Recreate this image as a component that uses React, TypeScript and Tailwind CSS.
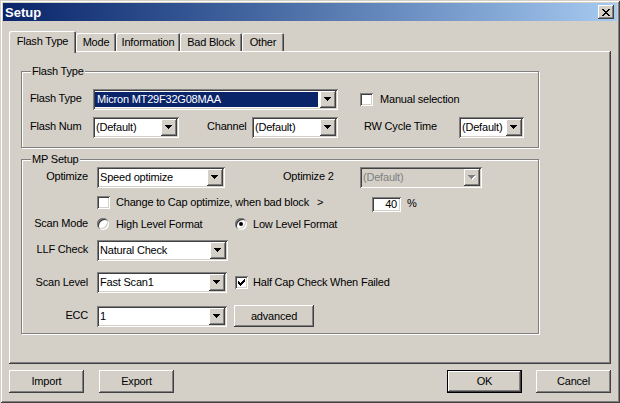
import React from "react";

const RAISED =
  "shadow-[inset_-1px_-1px_0_#404040,inset_1px_1px_0_#ffffff,inset_-2px_-2px_0_#808080,inset_2px_2px_0_#d4d0c8]";
const SUNKEN =
  "shadow-[inset_1px_1px_0_#808080,inset_-1px_-1px_0_#ffffff,inset_2px_2px_0_#404040,inset_-2px_-2px_0_#d4d0c8]";

function Arrow({ disabled }: { disabled?: boolean }) {
  const d = "M0 0h7v1h-1v1h-1v1h-1v1h-1v-1h-1v-1h-1v-1h-1z";
  return (
    <svg width="8" height="5" viewBox="0 0 8 5" shapeRendering="crispEdges">
      {disabled && <path d={d} fill="#ffffff" transform="translate(1 1)" />}
      <path d={d} fill={disabled ? "#808080" : "#000000"} />
    </svg>
  );
}

function Combo({
  cls,
  text,
  selected,
  disabled,
}: {
  cls: string;
  text: string;
  selected?: boolean;
  disabled?: boolean;
}) {
  return (
    <div
      className={`h-[21px] p-[2px] flex shrink-0 ${disabled ? "bg-[#d4d0c8]" : "bg-white"} ${SUNKEN} ${cls}`}
    >
      <div className="flex-1 flex items-center min-w-0 overflow-hidden whitespace-nowrap">
        {selected ? (
          <div className="h-[15px] flex-1 mr-[2px] bg-[#0a246a] text-white flex items-center pl-[2px]">
            {text}
          </div>
        ) : (
          <span className={`pl-[1px] ${disabled ? "text-[#808080]" : ""}`}>{text}</span>
        )}
      </div>
      <div className={`w-[16px] h-[17px] bg-[#d4d0c8] flex items-center justify-center ${RAISED}`}>
        <Arrow disabled={disabled} />
      </div>
    </div>
  );
}

function Check({ checked }: { checked?: boolean }) {
  const px: [number, number][] = [
    [6, 0],
    [5, 1], [6, 1],
    [0, 2], [4, 2], [5, 2], [6, 2],
    [0, 3], [1, 3], [3, 3], [4, 3], [5, 3],
    [0, 4], [1, 4], [2, 4], [3, 4], [4, 4],
    [1, 5], [2, 5], [3, 5],
    [2, 6],
  ];
  return (
    <div className={`w-[13px] h-[13px] bg-white shrink-0 flex items-center justify-center ${SUNKEN}`}>
      {checked && (
        <svg width="7" height="7" viewBox="0 0 7 7" shapeRendering="crispEdges">
          {px.map(([x, y], i) => (
            <rect key={i} x={x} y={y} width="1" height="1" fill="#000" />
          ))}
        </svg>
      )}
    </div>
  );
}

function Radio({ on }: { on?: boolean }) {
  return (
    <div
      className={`w-[12px] h-[12px] rounded-full bg-white shrink-0 flex items-center justify-center ${SUNKEN}`}
    >
      {on && <div className="w-[4px] h-[4px] rounded-full bg-black" />}
    </div>
  );
}

function Btn({ cls, children, def }: { cls: string; children: React.ReactNode; def?: boolean }) {
  if (def) {
    return (
      <div className={`h-[23px] border border-black ${cls}`}>
        <div className={`w-full h-full flex items-center justify-center ${RAISED}`}>{children}</div>
      </div>
    );
  }
  return (
    <div className={`h-[23px] flex items-center justify-center ${RAISED} ${cls}`}>{children}</div>
  );
}

function Group({
  label,
  cls,
  children,
}: {
  label: string;
  cls: string;
  children: React.ReactNode;
}) {
  return (
    <div
      className={`relative border border-[#808080] shadow-[inset_1px_1px_0_#ffffff,1px_1px_0_#ffffff] flex flex-col ${cls}`}
    >
      <span className="absolute left-[9px] -top-[7px] bg-[#d4d0c8] px-[1px] leading-[13px]">
        {label}
      </span>
      {children}
    </div>
  );
}

function Tab({ cls, children }: { cls: string; children: React.ReactNode }) {
  return (
    <div
      className={`h-[18px] flex items-center justify-center rounded-t-[2px] shadow-[inset_1px_1px_0_#ffffff,inset_-1px_0_0_#404040,inset_-2px_0_0_#808080] ${cls}`}
    >
      {children}
    </div>
  );
}

export default function App() {
  return (
    <div className="w-[620px] h-[403px] bg-[#d4d0c8] p-[3px] flex flex-col font-['Liberation_Sans',Arial,sans-serif] text-[11px] tracking-[-0.2px] text-black leading-none overflow-hidden select-none shadow-[inset_1px_1px_0_#d4d0c8,inset_-1px_-1px_0_#404040,inset_2px_2px_0_#ffffff,inset_-2px_-2px_0_#808080]">
      {/* Title bar */}
      <div className="h-[18px] flex items-center justify-between bg-linear-to-r from-[#0a246a] to-[#a6caf0] pl-[2px] pr-[3px]">
        <span className="text-white font-bold text-[13px] tracking-normal">Setup</span>
        <div className={`w-[16px] h-[14px] bg-[#d4d0c8] flex items-center justify-center ${RAISED}`}>
          <svg width="8" height="7" viewBox="0 0 8 7" shapeRendering="crispEdges">
            <path
              d="M0 0h2v1h1v1h2v-1h1v-1h2v1h-1v1h-1v1h-1v1h1v1h1v1h1v1h-2v-1h-1v-1h-2v1h-1v1h-2v-1h1v-1h1v-1h1v-1h-1v-1h-1v-1h-1z"
              fill="#000"
            />
          </svg>
        </div>
      </div>

      {/* Tabs */}
      <div className="mt-[10px] ml-[6px] h-[20px] flex items-end">
        <div className="relative z-10 -mb-[2px] h-[22px] w-[67px] bg-[#d4d0c8] rounded-t-[2px] flex items-center justify-center pb-[2px] shadow-[inset_1px_1px_0_#ffffff,inset_-1px_0_0_#404040,inset_-2px_0_0_#808080]">
          Flash Type
        </div>
        <Tab cls="w-[40px]">Mode</Tab>
        <Tab cls="w-[64px]">Information</Tab>
        <Tab cls="w-[62px]">Bad Block</Tab>
        <Tab cls="w-[42px]">Other</Tab>
      </div>

      {/* Panel */}
      <div className="ml-[6px] w-[602px] h-[313px] pl-[12px] flex flex-col shadow-[inset_-1px_-1px_0_#404040,inset_1px_1px_0_#ffffff,inset_-2px_-2px_0_#808080]">
        <Group label="Flash Type" cls="mt-[20px] w-[518px] h-[77px] pl-[8px]">
          <div className="mt-[17px] h-[21px] flex items-center">
            <span className="w-[63px] pb-[2px]">Flash Type</span>
            <Combo cls="w-[245px]" text="Micron MT29F32G08MAA" selected />
            <div className="ml-[22px]">
              <Check />
            </div>
            <span className="ml-[7px]">Manual selection</span>
          </div>
          <div className="mt-[7px] h-[21px] flex items-center">
            <span className="w-[63px] pb-[2px]">Flash Num</span>
            <Combo cls="w-[86px]" text="(Default)" />
            <span className="ml-[28px] w-[45px] pb-[2px]">Channel</span>
            <Combo cls="w-[86px]" text="(Default)" />
            <span className="ml-[26px] w-[95px] pb-[2px]">RW Cycle Time</span>
            <Combo cls="w-[65px]" text="(Default)" />
          </div>
        </Group>

        <Group label="MP Setup" cls="mt-[11px] w-[518px] h-[175px]">
          <div className="mt-[7px] h-[21px] flex items-center">
            <span className="w-[66px] text-right pb-[2px]">Optimize</span>
            <Combo cls="ml-[9px] w-[128px]" text="Speed optimize" />
            <span className="ml-[58px] w-[77px] pb-[2px]">Optimize 2</span>
            <Combo cls="w-[122px]" text="(Default)" disabled />
          </div>
          <div className="mt-[8px] h-[16px] flex items-start">
            <div className="ml-[75px]">
              <Check />
            </div>
            <span className="ml-[6px] w-[201px] h-[13px] flex items-center whitespace-nowrap">
              Change to Cap optimize, when bad block
            </span>
            <span className="w-[55px] h-[13px] flex items-center">&gt;</span>
            <div
              className={`mt-[1px] w-[29px] h-[15px] bg-white flex items-center justify-end pr-[4px] ${SUNKEN}`}
            >
              40
            </div>
            <span className="ml-[6px] h-[15px] flex items-center">%</span>
          </div>
          <div className="mt-[5px] h-[14px] flex items-center">
            <span className="w-[66px] text-right pb-[1px]">Scan Mode</span>
            <div className="ml-[9px]">
              <Radio />
            </div>
            <span className="ml-[7px] w-[119px]">High Level Format</span>
            <Radio on />
            <span className="ml-[6px]">Low Level Format</span>
          </div>
          <div className="mt-[9px] h-[21px] flex items-center">
            <span className="w-[66px] text-right pb-[2px]">LLF Check</span>
            <Combo cls="ml-[9px] w-[131px]" text="Natural Check" />
          </div>
          <div className="mt-[11px] h-[21px] flex items-center">
            <span className="w-[66px] text-right pb-[1px]">Scan Level</span>
            <Combo cls="ml-[9px] w-[130px]" text="Fast Scan1" />
            <div className="ml-[8px]">
              <Check checked />
            </div>
            <span className="ml-[5px]">Half Cap Check When Failed</span>
          </div>
          <div className="mt-[12px] h-[22px] flex items-center">
            <span className="w-[66px] text-right pb-[1px]">ECC</span>
            <Combo cls="ml-[9px] w-[130px]" text="1" />
            <div className={`ml-[7px] w-[80px] h-[22px] flex items-center justify-center ${RAISED}`}>
              advanced
            </div>
          </div>
        </Group>
      </div>

      {/* Bottom buttons */}
      <div className="mt-[6px] ml-[6px] w-[602px] flex justify-between">
        <div className="flex gap-[15px]">
          <Btn cls="w-[75px]">Import</Btn>
          <Btn cls="w-[75px]">Export</Btn>
        </div>
        <div className="flex gap-[14px]">
          <Btn cls="w-[75px]" def>
            OK
          </Btn>
          <Btn cls="w-[75px]">Cancel</Btn>
        </div>
      </div>
    </div>
  );
}
